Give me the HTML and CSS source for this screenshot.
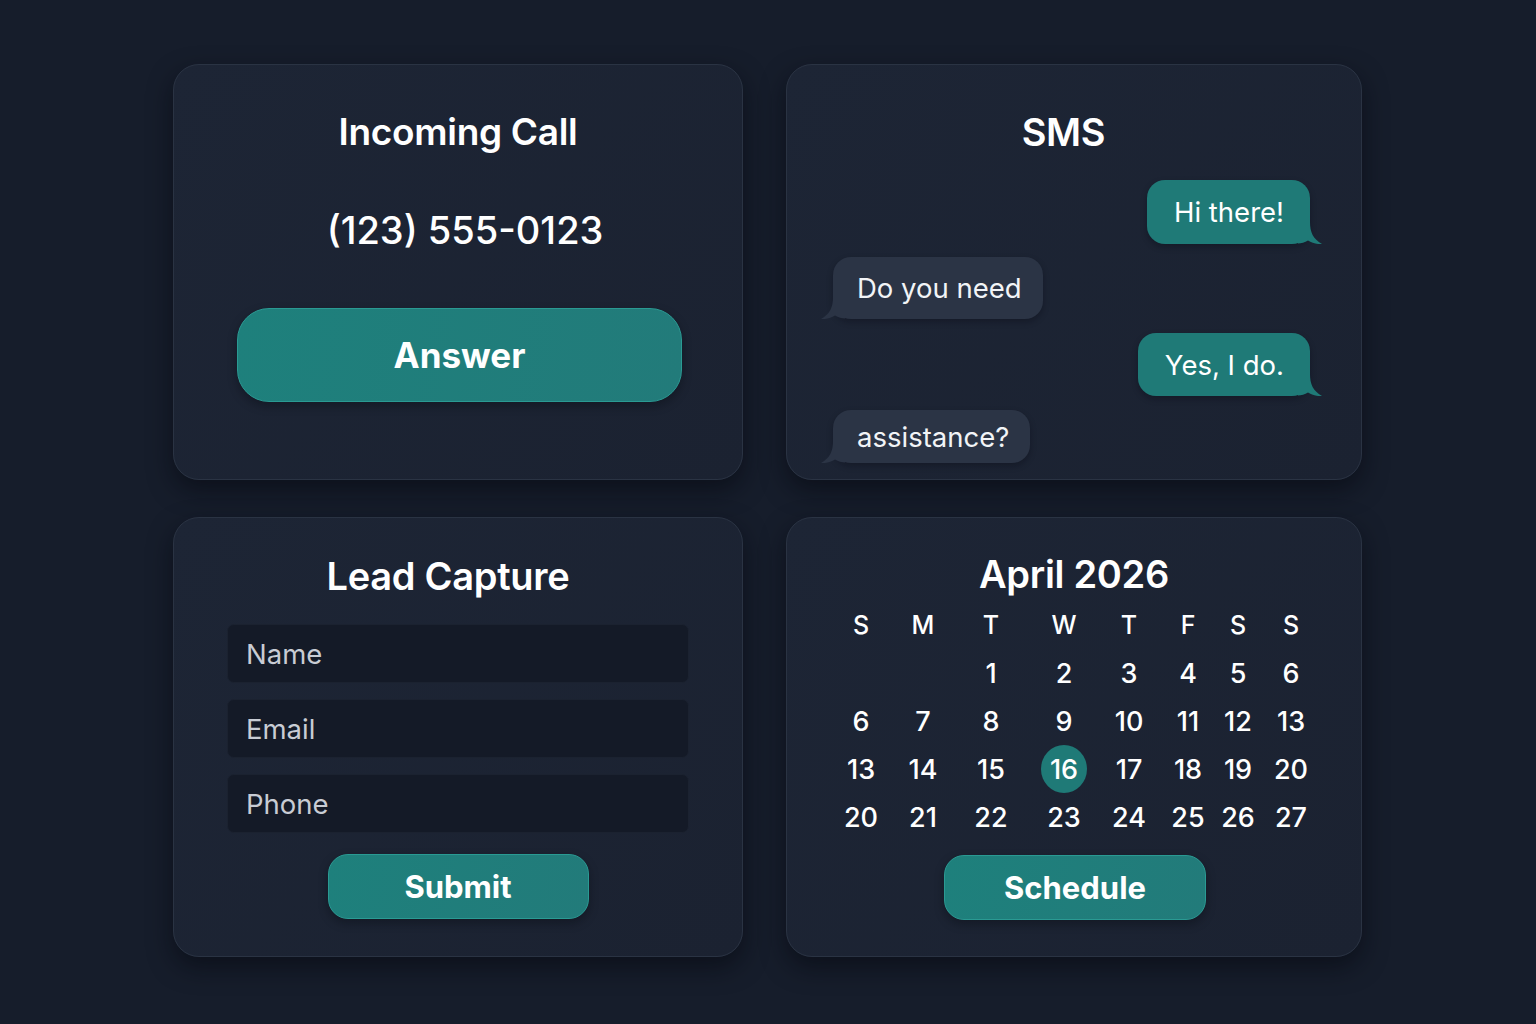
FILE: index.html
```html
<!DOCTYPE html>
<html lang="en">
<head>
<meta charset="utf-8">
<title>Widgets</title>
<link rel="stylesheet" href="styles.css">
</head>
<body>
<main class="board">
  <section class="card call">
    <h2 class="title">Incoming Call</h2>
    <div class="phone">(123) 555-0123</div>
    <button class="btn btn-answer">Answer</button>
  </section>

  <section class="card sms">
    <h2 class="title">SMS</h2>
    <div class="thread">
      <div class="bubble out b1">Hi there!
        <svg class="tail" viewBox="0 0 24 24" width="24" height="24"><path d="M0 2 H12 C12 12 15 19 24 24 C19 24.5 14 23 10 20.5 C7 22.5 3 23.5 0 23.5 Z"/></svg>
      </div>
      <div class="bubble in b2">Do you need
        <svg class="tail" viewBox="0 0 24 24" width="24" height="24"><path d="M24 2 H12 C12 12 9 19 0 24 C5 24.5 10 23 14 20.5 C17 22.5 21 23.5 24 23.5 Z"/></svg>
      </div>
      <div class="bubble out b3">Yes, I do.
        <svg class="tail" viewBox="0 0 24 24" width="24" height="24"><path d="M0 2 H12 C12 12 15 19 24 24 C19 24.5 14 23 10 20.5 C7 22.5 3 23.5 0 23.5 Z"/></svg>
      </div>
      <div class="bubble in b4">assistance?
        <svg class="tail" viewBox="0 0 24 24" width="24" height="24"><path d="M24 2 H12 C12 12 9 19 0 24 C5 24.5 10 23 14 20.5 C17 22.5 21 23.5 24 23.5 Z"/></svg>
      </div>
    </div>
  </section>

  <section class="card lead">
    <h2 class="title">Lead Capture</h2>
    <div class="fields">
      <div class="field">Name</div>
      <div class="field">Email</div>
      <div class="field">Phone</div>
    </div>
    <button class="btn btn-small">Submit</button>
  </section>

  <section class="card cal">
    <h2 class="title">April 2026</h2>
    <div class="grid">
      <span class="dh">S</span><span class="dh">M</span><span class="dh">T</span><span class="dh">W</span><span class="dh">T</span><span class="dh">F</span><span class="dh">S</span><span class="dh">S</span>
      <span></span><span></span><span>1</span><span>2</span><span>3</span><span>4</span><span>5</span><span>6</span>
      <span>6</span><span>7</span><span>8</span><span>9</span><span>10</span><span>11</span><span>12</span><span>13</span>
      <span>13</span><span>14</span><span>15</span><span class="today"><i>16</i></span><span>17</span><span>18</span><span>19</span><span>20</span>
      <span>20</span><span>21</span><span>22</span><span>23</span><span>24</span><span>25</span><span>26</span><span>27</span>
    </div>
    <button class="btn btn-small btn-sched">Schedule</button>
  </section>
</main>
</body>
</html>
```

FILE: styles.css
```css
* { box-sizing: border-box; }

html, body {
  margin: 0;
  padding: 0;
  background: #161d2b;
  width: 1536px;
  height: 1024px;
  overflow: hidden;
  font-family: Inter, "Noto Sans", "Liberation Sans", sans-serif;
  color: #ffffff;
}

.board {
  display: grid;
  grid-template-columns: 570px 576px;
  grid-template-rows: 416px 440px;
  column-gap: 43px;
  row-gap: 37px;
  padding: 64px 0 0 173px;
}

.card {
  background: linear-gradient(135deg, #1d2535 0%, #1b2231 100%);
  border: 1px solid #2a3343;
  border-radius: 26px;
  box-shadow: 0 10px 24px rgba(5, 8, 15, 0.55);
  display: flex;
  flex-direction: column;
  align-items: center;
}

.title {
  margin: 0;
  font-size: 37px;
  line-height: 44px;
  font-weight: 600;
  letter-spacing: -0.3px;
  text-align: center;
}

.btn {
  border: 1px solid #2a9a93;
  background: linear-gradient(100deg, #1e807c 0%, #227b7a 100%);
  color: #ffffff;
  font-family: inherit;
  font-weight: 700;
  cursor: pointer;
  box-shadow: 0 4px 10px rgba(5, 8, 15, 0.35);
}

/* Incoming call */
.call { padding-top: 45px; }
.call .title { width: 100%; }
.phone {
  margin-top: 53px;
  font-size: 38px;
  line-height: 46px;
  font-weight: 500;
  padding-left: 14px;
}
.btn-answer {
  margin-top: 55px;
  width: 445px;
  height: 94px;
  border-radius: 32px;
  font-size: 35px;
  margin-left: 3px;
}

/* SMS */
.sms { padding-top: 45px; }
.sms .title { font-size: 38px; margin-left: -21px; }
.thread {
  width: 100%;
  margin-top: 26px;
  padding: 0 51px 0 46px;
  display: flex;
  flex-direction: column;
  gap: 13px;
}
.bubble {
  position: relative;
  font-size: 27.5px;
  line-height: 30px;
  font-weight: 400;
  border-radius: 18px;
  display: flex;
  align-items: center;
  box-shadow: 0 3px 6px rgba(5, 8, 15, 0.3);
}
.bubble .tail {
  position: absolute;
  bottom: 0;
}
.bubble.out {
  align-self: flex-end;
  background: #1f7a77;
  padding: 0 26px 0 27px;
}
.bubble.out .tail { right: -12px; fill: #1f7a77; }
.bubble.in {
  align-self: flex-start;
  background: #2b3445;
  color: #f2f4f7;
  padding: 0 21px 0 24px;
}
.bubble.in .tail { left: -12px; fill: #2b3445; }
.b1 { height: 64px; }
.b2 { height: 62px; }
.b3 { height: 63px; margin-top: 1px; }
.b4 { height: 53px; margin-top: 1px; }

/* Lead capture */
.lead { padding-top: 36px; }
.lead .title { font-size: 38px; margin-left: -20px; }
.fields {
  width: 100%;
  margin-top: 26px;
  padding: 0 53px 0 53px;
  display: flex;
  flex-direction: column;
  gap: 16px;
}
.field {
  height: 59px;
  background: #141a27;
  border: 1px solid #1b2230;
  border-radius: 7px;
  padding-left: 18px;
  display: flex;
  align-items: center;
  font-size: 27.5px;
  color: #c8ccd4;
}
.btn-small {
  margin-top: 21px;
  width: 261px;
  height: 65px;
  border-radius: 20px;
  font-size: 31px;
}

/* Calendar */
.cal { padding-top: 34px; }
.cal .title { font-size: 38px; }
.grid {
  margin-top: 5px;
  display: grid;
  grid-template-columns: 62px 62px 74px 72px 58px 60px 40px 66px;
  grid-auto-rows: 48px;
  margin-left: 6px;
}
.grid span {
  display: flex;
  align-items: center;
  justify-content: center;
  font-size: 27px;
  font-weight: 500;
}
.grid .dh { font-size: 25px; }
.grid .today i {
  font-style: normal;
  width: 46px;
  height: 48px;
  border-radius: 50%;
  background: #1f7a77;
  display: flex;
  align-items: center;
  justify-content: center;
}
.btn-sched { margin-top: 14px; width: 262px; margin-left: 2px; }
```
